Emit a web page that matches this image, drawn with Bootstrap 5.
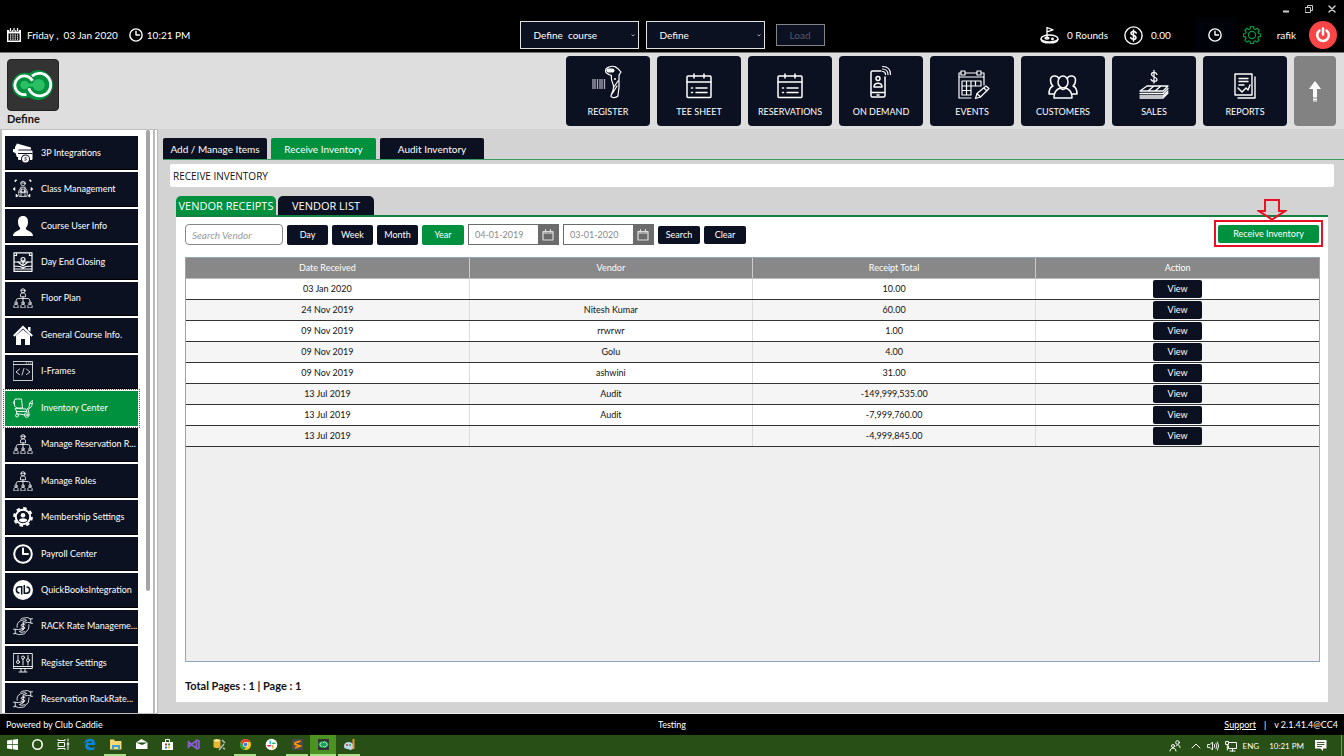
<!DOCTYPE html>
<html lang="en">
<head>
<meta charset="utf-8">
<meta name="viewport" content="width=device-width, initial-scale=1">
<title>Club Caddie - Receive Inventory</title>
<link rel="stylesheet" href="https://cdn.jsdelivr.net/npm/bootstrap@5.3.0/dist/css/bootstrap.min.css">
<style>
:root{--navy:#0c1122;--green:#00913f}
body{font-family:Lato,"Open Sans",sans-serif;font-size:9px;line-height:12px;color:#111;background:#d3d3d3}
button,input,select{font-family:inherit;font-size:inherit;line-height:inherit}
svg{display:block;flex:none}
.ln{fill:none;stroke:currentColor;stroke-linecap:round;stroke-linejoin:round}
.i20{width:20px;height:20px}
.topbar{background:#000;color:#fff;height:53px;border-bottom:1px solid #777070;font-size:10px}
.winctl{height:18px;padding-right:8px;gap:15px}
.winctl button{width:8px;height:8px;padding:0;border:0;background:none;color:#ccc}
.toprow{height:34px;padding:0 7px 0 7px}
.pickers{gap:7px}
.today{white-space:pre;margin:0 11px 0 6px}
.picker{width:119px;height:28px;border:1px solid #e2e2e2;border-radius:0;color:#fff;padding:0 9px 0 13px;appearance:none;background:var(--navy) url("data:image/svg+xml,%3Csvg xmlns='http://www.w3.org/2000/svg' viewBox='0 0 4 3'%3E%3Cpath d='M.5.5 2 2 3.5.5' fill='none' stroke='%23ccc' stroke-width='.8'/%3E%3C/svg%3E") no-repeat right 3px center/4px 3px}
.loadbtn{width:49px;height:22px;margin-left:4px;border:1px solid #848488;background:var(--navy);color:#555968;padding:0}
.clockbtn{width:40px;height:34px;background:#00020a;border:0;color:#fff;padding:0}
.plainbtn{background:none;border:0;padding:0}
.power{width:28px;height:28px;margin-left:13px;border-radius:50%;background:#f94545;color:#fff;border:0;padding:0}
.apphead{background:#dedede;height:76px;padding:3px 8px 3px 7px}
.logo{width:52px;height:52px;margin-top:3px;border-radius:4px;background:#333;border:1px solid #222}
.clubname{font-size:11px;font-weight:700;line-height:16px}
.tiles{gap:7px}
.tile{width:84px;height:70px;border:0;border-radius:4px;background:var(--navy);color:#fff;padding:0;font-size:9px}
.tile svg{width:36px;height:36px;margin:0 auto 5px}
.tile.up{width:42px;background:#828282}
.bodyrow{min-height:0}
.side{width:158px;background:#fff;border:1px solid #bdbdbd;border-width:1px 0 1px 2px;padding:6px 20px 0 3px}
.side ul{display:grid;grid-template:repeat(16,1fr)/minmax(0,1fr);gap:2px;height:calc(100% + 4px);margin:0;padding:0;list-style:none}
.side li{min-height:0}
.side a{display:flex;align-items:center;gap:8px;height:100%;padding:0 0 0 8px;background:var(--navy);color:#fff;text-decoration:none;border-bottom:1px solid #000;white-space:nowrap}
.side a.on{background:var(--green);border-color:var(--green);outline:1px dotted #555;outline-offset:1px}
.thumb{position:absolute;right:8px;top:0;width:4px;height:79%;background:#a5a5a5;border-radius:2px}
.rail{position:absolute;right:0;top:0;width:5px;height:100%;border:solid #bbb;border-width:0 1px 0 2px}
.content{padding:9px 0 11px 5px;min-width:0;border-bottom:1px solid #eee}
.maintabs{gap:4px;border-bottom:1px solid #399e62;font-size:10px}
.maintabs button{width:104px;height:21px;border:0;border-radius:2px 2px 0 0;background:var(--navy);color:#fff;padding:0}
.maintabs button.on{width:105px}
.maintabs .on,.subtabs .on,.navybtn.on{background:var(--green)}
.pagebar{margin:4px 10px 0 7px;height:23px;background:#fff;border-radius:2px;padding:0 3px;font-family:"Open Sans",sans-serif;font-size:10px}
.work{margin:9px 16px 0 13px;min-height:0}
.subtabs{gap:2px;border-bottom:2px solid #148143;font-family:"Open Sans",sans-serif;font-size:11px}
.subtabs button{width:96px;height:19px;border:0;border-radius:5px 5px 0 0;background:var(--navy);color:#fff;padding:0;white-space:nowrap}
.subtabs .on{width:100px}
.pane{background:#fff;padding:7px 8px 9px 9px;min-height:0}
.filters{gap:4px;height:21px}
.search{width:98px;height:21px;border:1px solid #888;border-radius:4px;padding:0 6px;font-style:italic;font-size:10px}
.search::placeholder{color:#9a9a9a}
.navybtn{height:20px;width:41px;border:0;border-radius:2px;background:var(--navy);color:#fff;padding:0}
.navybtn.on,.navybtn.low{width:42px}
.navybtn.low{height:18px}
.datebox{width:91px;height:21px;border:1px solid #6b6b6b;background:#6b6b6b}
.datebox input{flex:1;min-width:0;border:0;padding:0 6px;color:#8a8a8a;background:#fff}
.datebox button{width:20px;border:0;padding:0;background:#6b6b6b;color:#ddd}
.callout{border:2px solid #e81123;padding:3px 2px 2px;position:relative;margin:0 -3px 2px 0}
.callout .recv{width:101px;height:18px;border:0;border-radius:2px;background:var(--green);color:#fff;padding:0}
.callout .arrow{position:absolute;right:34px;bottom:100%;margin-bottom:1px}
.gridbox{margin-top:12px;background:#efefef;border:1px solid #8fa6bb;min-height:0}
.receipts{width:100%;table-layout:fixed;text-align:center}
.receipts th{height:20px;padding:0;background:#888;color:#fff;font-weight:400;border-bottom:1px solid #bbb;border-right:1px solid #ccc}
.receipts td{height:21px;padding:0;border-bottom:1px solid #333;border-right:1px solid #ddd;background:#fff}
.receipts tr:nth-child(even) td{background:#f5f5f5}
.receipts tr>:last-child{border-right:0}
.viewbtn{display:block;margin:0 auto;width:49px;height:18px;border:0;border-radius:2px;background:var(--navy);color:#fff;padding:0}
.pages{margin-top:17px;font-size:11px;font-weight:700;line-height:14px}
.foot{background:#000;color:#fff;height:21px;padding:0 6px}
.foot a{color:#fff}
.task{background:#284f15;color:#fff;height:21px}
.task .app{width:26px;height:21px;padding:0;border:0;border-bottom:2px solid transparent;background:none;color:#fff}
.task .app:first-child{width:24px}
.task .app.run{border-image:linear-gradient(90deg,transparent 3px,#a8df86 3px,#a8df86 23px,transparent 23px) 1;border-width:0 0 2px}
.task .app.cur{background:#4a9222;border-bottom-color:#a8df86}
.task .app svg{margin:0 auto;width:13px;height:13px}
.tray{gap:6px;padding-right:2px;font-size:8px}
</style>
</head>
<body>
<svg width="0" height="0" class="position-absolute" aria-hidden="true">
<defs>
<symbol id="clock" viewBox="0 0 20 20"><g class="ln" stroke-width="2"><circle cx="10" cy="10" r="8.8"/><path d="M10 4.5V10h5"/></g></symbol>
<symbol id="org" viewBox="0 0 20 20"><g class="ln" stroke-width=".8"><circle cx="10" cy="2.800" r="2.100"/><path d="M7.500 8.500V7c0-3 5-3 5 0v1.500zM8 2.300h4M10 8.500V14M3 13.500c0-2.500 1-3 3-3h8c2 0 3 .5 3 3"/><circle cx="3" cy="15" r="1.200"/><circle cx="10" cy="15" r="1.200"/><circle cx="17" cy="15" r="1.200"/><path d="M.9 19.500v-1.700c0-2 4.200-2 4.200 0v1.700zM7.900 19.500v-1.700c0-2 4.200-2 4.200 0v1.700zM14.900 19.500v-1.700c0-2 4.200-2 4.200 0v1.700z"/></g></symbol>
<symbol id="hands" viewBox="0 0 22 20"><g class="ln" stroke-width=".9"><path d="M21.500 2h-2v5h2M19.500 2.500 16 .7 10 1.500C8.500 2 8 3.500 9 4l4-1 2 1-4 1.500c-.5 1 .5 1.500 1.500 1.300L16 6l3.500.5M.5 18.500h2v-5h-2M2.500 18l3.500 1.500 6-.7c1.500-.5 2-2 1-2.500l-4 .7-2-1 4-1.500c.5-1-.5-1.500-1.500-1.300L6 14l-3.500-.3M4.500 11.500C4 8 5.500 5 8 4.500M17.500 8.500c.5 4-1 7-3.500 8"/><path d="M13.300 9C12.500 7.300 9 7.500 9 9.300s4 1 4 2.700c0 1.600-3.300 1.500-4 .2M11.200 7v7" stroke-width="1.100"/></g></symbol>
<symbol id="cal" viewBox="0 0 36 36"><g class="ln" stroke-width="1.500"><rect x="6" y="11" width="24" height="21.500" rx="1"/><path d="M6 17h24M13 9v4M23 9v4M15 23h11M15 27.500h11M10.500 23h1M10.500 27.500h1"/></g></symbol>
<symbol id="dcal" viewBox="0 0 12 12"><path class="ln" d="M1 2.500h10v8.500H1zM1 4h10M3.500.700v2M8.500.700v2" stroke-width="1.200"/></symbol>
<symbol id="cc" viewBox="0 0 44 34"><path fill="#00913f" d="M27 1a16 16 0 1 1-9 29A13.500 13.500 0 1 1 15 4l3 .5A16 16 0 0 1 27 1"/><circle cx="28" cy="17" r="6.500" fill="#2bbf63"/><circle cx="13" cy="17" r="4.500" fill="#2bbf63"/><path d="M12 17h15" stroke="#2bbf63" stroke-width="3.500"/><g fill="none" stroke="#fff" stroke-width="3"><path d="M21.500 12.500A10 10 0 1 0 15 27M17.500 20.500a12 12 0 1 0 3.500-13"/></g></symbol>
</defs>
</svg>

<div class="d-flex flex-column vh-100 overflow-hidden">
<header class="topbar flex-shrink-0">
  <div class="winctl d-flex justify-content-end align-items-center">
    <button aria-label="Minimize"><svg width="8" height="8"><path d="M1 6.500h6" stroke="currentColor" stroke-width="2"/></svg></button>
    <button aria-label="Restore"><svg width="8" height="8" class="ln"><path d="M.5 2.500h5v5h-5zM2.500 2.500v-2h5v5h-2"/></svg></button>
    <button aria-label="Close"><svg width="8" height="8" class="ln" stroke-width="1.500"><path d="M1 1l6 6M7 1 1 7"/></svg></button>
  </div>
  <div class="toprow d-flex align-items-center">
    <div class="d-flex align-items-center flex-fill w-25">
      <svg width="14" height="14" viewBox="0 0 14 14"><path fill="#fff" d="M0 2h14v12H0z"/><path d="M1.500 5.500h11v7h-11z" fill="#000"/><path d="M3 7.200h8.500M3 9.200h8.500M3 11.200h8.500" stroke="#fff" stroke-width="1.200" stroke-dasharray="1.300 1"/><path d="M3.500 0v3.500M7 0v3.500M10.500 0v3.500" stroke="#000" stroke-width="2.500"/><path d="M3.500 0v3M7 0v3M10.500 0v3" stroke="#fff" stroke-width="1.200"/></svg>
      <span class="today">Friday ,  03 Jan 2020</span>
      <svg width="14" height="14"><use href="#clock"/></svg><span class="ms-1">10:21 PM</span>
    </div>
    <div class="pickers d-flex align-items-center">
      <select class="picker" aria-label="Course"><option>Define &nbsp;course</option></select>
      <select class="picker" aria-label="Definition"><option>Define</option></select>
      <button class="loadbtn" disabled>Load</button>
    </div>
    <div class="d-flex align-items-center justify-content-end flex-fill w-25">
      <svg width="19" height="19" viewBox="0 0 19 19" class="ln" stroke-width="1.300"><ellipse cx="9.500" cy="12.500" rx="8.500" ry="3.500"/><path d="M1 13.500c1 4.500 16 4.500 17 0M7 11.500V1.500l6 2.300-6 2"/><ellipse cx="7" cy="12.300" rx="2" ry=".8"/><circle cx="12.500" cy="13" r=".8"/></svg>
      <span class="ms-2">0 Rounds</span>
      <svg class="ms-3" width="19" height="19" viewBox="0 0 19 19"><g class="ln" stroke-width="1.400"><circle cx="9.500" cy="9.500" r="8.600"/><path d="M12.200 7C11.500 5 7 5 7 7.300s5 1.800 5 4.200-4.500 2.300-5.300.2M9.500 4v11" stroke-width="1.600"/></g></svg>
      <span class="ms-2">0.00</span>
      <button class="clockbtn ms-4" aria-label="Time clock"><svg class="mx-auto" width="14" height="14"><use href="#clock"/></svg></button>
      <button class="plainbtn ms-2" aria-label="Settings"><svg width="18" height="18" viewBox="0 0 18 18" fill="none" stroke="#07983f" stroke-width="1.200"><circle cx="9" cy="9" r="3.600"/><path d="M7.500.7h3l.4 2.200 1.400.6 1.900-1.200 2 2L15 6.100l.5 1.400 2 .4v2.500l-2 .4-.6 1.400 1.200 1.900-2 2-1.900-1.200-1.400.6-.4 2H7.600l-.5-2-1.400-.6-1.900 1.200-2-2L3 12.200l-.6-1.400-1.900-.4V7.900l2-.4.600-1.400-1.200-1.800 2-2 1.800 1.200 1.400-.6z"/></svg></button>
      <span class="ms-3">rafik</span>
      <button class="power" aria-label="Log out"><svg class="mx-auto ln" width="16" height="16" stroke-width="2.500"><path d="M8 1.500v6M4.500 3.500a5.800 5.800 0 1 0 7 0"/></svg></button>
    </div>
  </div>
</header>

<div class="apphead d-flex justify-content-between flex-shrink-0">
  <div><div class="logo d-flex align-items-center justify-content-center"><svg width="44" height="32"><use href="#cc"/></svg></div><div class="clubname">Define</div></div>
  <nav class="tiles d-flex">
    <button class="tile"><svg viewBox="0 0 36 36"><path d="M3 14v10M5 14v10M7.500 14v10M10 14v10M12 14v10M14.500 14v10" stroke="#aab" stroke-width="1.300"/><g class="ln" stroke-width="1.200"><path d="M19 2c5-2 8 0 12 5-1 2-2 2-2 4v12c-.5 3-1 6-1 8-2 2-6 2-7 .5 0-3 3-6 2.500-10 0-4-3-5-2-11-3-1-6-2-6-4.500 0-3 2-3.500 3.500-4zM24 22l4-6M22 29l5-8"/></g><rect x="16.500" y="3.500" width="8" height="4" rx="2" fill="#fff"/><circle cx="25" cy="14" r="1" fill="#fff"/></svg>REGISTER</button>
    <button class="tile"><svg><use href="#cal"/></svg>TEE SHEET</button>
    <button class="tile"><svg><use href="#cal"/></svg>RESERVATIONS</button>
    <button class="tile"><svg viewBox="0 0 36 36"><g class="ln" stroke-width="1.500"><path d="M18 6H9.500Q8 6 8 7.500v23q0 1.500 1.500 1.500h11q1.500 0 1.500-1.500V12M8 27.500h14M14 30h2"/><circle cx="15" cy="13.500" r="2"/><path d="M11 22c0-5 8-5 8 0z"/><path d="M19.500 6.500c2 0 3 1 3 3M19.500 4c3 0 5.500 2 5.500 5.500M19.500 1.500c5 0 8 3 8 8" stroke-width="1.200"/></g></svg>ON DEMAND</button>
    <button class="tile"><svg viewBox="0 0 36 36"><g class="ln" stroke-width="1.200"><path d="M17 33H5V8h2M11 8h12M27 8h3v12M5 12h25M7 6h4v4H7zM23 6h4v4h-4zM8 16h19v5H8zM8 21v9h9v-9M8 25.500h9M12.500 16v14M17 16v5M21.500 16v5M32 21l3 2.500-8.500 8.500-5 1.500 1.500-5zM23 28.500l3.500 3.500M30 23l3 3"/></g></svg>EVENTS</button>
    <button class="tile"><svg viewBox="0 0 36 36"><g class="ln" stroke-width="1.500"><ellipse cx="18" cy="17" rx="5" ry="6"/><path d="M9 33c0-6 2-8 6-10 2 2 4 2 6 0 4 2 6 4 6 10zM13.500 13c-1-3-8-3-8 2 0 3 1 5 2.500 6-3 1-4 3-4 8h5M22.500 13c1-3 8-3 8 2 0 3-1 5-2.500 6 3 1 4 3 4 8h-5"/></g></svg>CUSTOMERS</button>
    <button class="tile"><svg viewBox="0 0 36 36"><g class="ln" stroke-width="1.300"><path d="M21 9.500C20 6.500 15.500 7 15.500 9.500S21 12 21 14.500 16 17 15 14.500M18 5.500v12.500M11 21h21l-5 5H4zM4 28.500h23l5-5M4 31h23l5-5M4 33h23l5-5M18 21l-6 5M25 21l-6 5"/></g></svg>SALES</button>
    <button class="tile"><svg viewBox="0 0 36 36"><g class="ln" stroke-width="1.400"><path d="M8 9h17v21H8zM11 33h17V12M12 13.500h9M12 16.500h9M12 20h5M11 23l4 4 4-4 2 2 2-5"/></g></svg>REPORTS</button>
    <button class="tile up" aria-label="Scroll up"><svg class="mb-0" viewBox="0 0 36 36"><path fill="#fff" d="M18 8l6 8h-4v8h-4v-8h-4z"/><path d="M18 24.500v4" stroke="#fff" stroke-width="4" stroke-dasharray="1 .5"/></svg></button>
  </nav>
</div>

<div class="bodyrow d-flex flex-grow-1">
  <nav class="side flex-shrink-0 position-relative overflow-hidden">
    <ul>
      <li><a href="#"><svg class="i20" viewBox="0 0 20 20"><path fill="#fff" d="M2 4 4 .5 18 4.500v2H5.500V14H3.800L2.500 10 0 9V6h2z"/><rect x="5" y="7.500" width="14.500" height="9.500" rx="1" fill="#fff"/><path d="M5 10.500h14.500" stroke="#0c1122"/><circle cx="12.500" cy="16" r="4.500" fill="#0c1122"/><circle cx="12.500" cy="16" r="3.500" fill="#fff"/><path d="M13.600 14.700c-2-.8-2.500.8-1 1.200s1 2-1.200 1.200" fill="none" stroke="#0c1122" stroke-width=".8"/></svg><span>3P Integrations</span></a></li>
      <li><a href="#"><svg class="i20" viewBox="0 0 20 20"><g class="ln" stroke-width=".8"><circle cx="10" cy="4.500" r="2.300"/><path d="M6 17c-1-4 0-8 4-9 4 1 5 5 4 9zM8 4h4M8 8v9M12 8v9M6 13h8"/><circle cx="10" cy="12" r="2"/></g><path d="M2 1h2L2 3zM18 1h-2l2 2zM0 10l2-1.500v3zM20 10l-2-1.500v3zM3 15l2 2-2 1zM17 15l-2 2 2 1z" fill="#fff" stroke="#fff" stroke-width=".6"/></svg><span>Class Management</span></a></li>
      <li><a href="#"><svg class="i20" viewBox="0 0 20 20"><path fill="#fff" d="M10 0c3.500 0 5 2.500 5 6 0 3-1 5-2.300 6 0 3.500 7.300 2.500 7.300 8H0c0-5.500 7.300-4.500 7.300-8C6 11 5 9 5 6c0-3.500 1.500-6 5-6"/></svg><span>Course User Info</span></a></li>
      <li><a href="#"><svg class="i20" viewBox="0 0 20 20"><g class="ln" stroke-width="1.200"><path d="M1 .8h18v18.500H1zM2 3.500h1.500V2M18 3.500h-1.500V2M1 10h4l5 4 5-4h4M1 14l6 .5 3 1.500 3-1.500 6-.5M1 17h18"/><circle cx="10" cy="7.500" r="2"/><path d="M5 10h10M10 8v5"/></g></svg><span>Day End Closing</span></a></li>
      <li><a href="#"><svg class="i20"><use href="#org"/></svg><span>Floor Plan</span></a></li>
      <li><a href="#"><svg class="i20" viewBox="0 0 20 20"><path fill="#fff" d="M10 4.500l7 6V20h-5v-6H8v6H3v-9.500zM15 2h2.500v5L15 5z"/><path d="M.8 11 10 2l9.200 9" fill="none" stroke="#fff" stroke-width="2"/></svg><span>General Course Info.</span></a></li>
      <li><a href="#"><svg class="i20" viewBox="0 0 20 20"><g class="ln" stroke-width=".8"><path d="M.5.5h19v19H.5zM.5 3.500h19M13 2h.5M15.300 2h.5M17.500 2h.5M6.500 8 3 11l3.500 2.500M13.500 8l3.500 3-3.500 2.500M11 7.500 9 14"/></g></svg><span>I-Frames</span></a></li>
      <li><a href="#" class="on" aria-current="page"><svg class="i20" viewBox="0 0 20 20"><g class="ln" stroke-width=".9"><path d="M2.500 1h6l1 9H4L1.500 8V3zM1.500 3C0 3 0 5.500 1 6M2.500 10.500 13 11l1 2.500H4zM14 11l2-1 .5-5 3-2.500M19.500 4c0 3-1 5-3 6.500M15 11l1 4M3.500 13.500v2L12 17M16.500 5.500h2"/><circle cx="4" cy="17.500" r="1.500"/><circle cx="13.800" cy="17" r="2.300"/><circle cx="13.800" cy="17" r=".6"/></g></svg><span>Inventory Center</span></a></li>
      <li><a href="#"><svg class="i20"><use href="#org"/></svg><span>Manage Reservation R...</span></a></li>
      <li><a href="#"><svg class="i20"><use href="#org"/></svg><span>Manage Roles</span></a></li>
      <li><a href="#"><svg class="i20" viewBox="0 0 20 20"><circle cx="10" cy="10" r="7.200" fill="none" stroke="#fff" stroke-width="2"/><circle cx="10" cy="10" r="8.800" fill="none" stroke="#fff" stroke-width="2.200" stroke-dasharray="3.450 3.450"/><circle cx="10" cy="8.200" r="2.300" fill="#fff"/><path d="M5.800 13.500c.5-3 8-3 8.500 0-2 2.300-6.500 2.300-8.500 0" fill="#fff"/></svg><span>Membership Settings</span></a></li>
      <li><a href="#"><svg class="i20"><use href="#clock"/></svg><span>Payroll Center</span></a></li>
      <li><a href="#"><svg class="i20" viewBox="0 0 20 20"><circle cx="10" cy="10" r="10" fill="#fff"/><path d="M8.700 14.500V6.700H6.500a3 3 0 0 0 0 6.300M11.300 5v8.200h2.200a3 3 0 0 0 0-6.300" fill="none" stroke="#0c1122" stroke-width="1.500"/></svg><span>QuickBooksIntegration</span></a></li>
      <li><a href="#"><svg class="i20"><use href="#hands"/></svg><span>RACK Rate Manageme...</span></a></li>
      <li><a href="#"><svg class="i20" viewBox="0 0 20 20"><g class="ln" stroke-width=".9"><path d="M.7.5h18.600v15H.7zM.7 13.500h18.600M8 15.500v3M12 15.500v3M6 19h8M5 2.500v5M10 6v6M15 2.500v3M15 9v3"/><circle cx="5" cy="9" r="1.500"/><circle cx="10" cy="4.500" r="1.500"/><circle cx="15" cy="7.300" r="1.500"/></g></svg><span>Register Settings</span></a></li>
      <li><a href="#"><svg class="i20"><use href="#hands"/></svg><span>Reservation RackRate...</span></a></li>
    </ul>
    <div class="thumb"></div><div class="rail"></div>
  </nav>

  <main class="content flex-grow-1 d-flex flex-column">
    <div class="maintabs d-flex flex-shrink-0"><button>Add / Manage Items</button><button class="on">Receive Inventory</button><button>Audit Inventory</button></div>
    <div class="pagebar d-flex align-items-center flex-shrink-0">RECEIVE INVENTORY</div>
    <section class="work d-flex flex-column flex-grow-1">
      <div class="subtabs d-flex flex-shrink-0"><button class="on">VENDOR RECEIPTS</button><button>VENDOR LIST</button></div>
      <div class="pane d-flex flex-column flex-grow-1">
        <div class="filters d-flex align-items-center flex-shrink-0">
          <input class="search" type="text" placeholder="Search Vendor" aria-label="Search Vendor">
          <button class="navybtn">Day</button><button class="navybtn">Week</button><button class="navybtn">Month</button><button class="navybtn on">Year</button>
          <div class="datebox d-flex"><input type="text" value="04-01-2019" aria-label="From date"><button aria-label="Pick from date"><svg class="mx-auto" width="12" height="12"><use href="#dcal"/></svg></button></div>
          <div class="datebox d-flex"><input type="text" value="03-01-2020" aria-label="To date"><button aria-label="Pick to date"><svg class="mx-auto" width="12" height="12"><use href="#dcal"/></svg></button></div>
          <button class="navybtn low">Search</button><button class="navybtn low">Clear</button>
          <div class="callout ms-auto"><svg class="arrow" width="30" height="22" viewBox="0 0 30 22"><path d="M8 1h14v11h6L15 20.500 2 12h6z" fill="none" stroke="#e81123" stroke-width="2"/></svg><button class="recv d-block">Receive Inventory</button></div>
        </div>
        <div class="gridbox flex-grow-1">
          <table class="receipts">
            <thead><tr><th>Date Received</th><th>Vendor</th><th>Receipt Total</th><th>Action</th></tr></thead>
            <tbody>
              <tr><td>03 Jan 2020</td><td></td><td>10.00</td><td><button class="viewbtn">View</button></td></tr>
              <tr><td>24 Nov 2019</td><td>Nitesh Kumar</td><td>60.00</td><td><button class="viewbtn">View</button></td></tr>
              <tr><td>09 Nov 2019</td><td>rrwrwr</td><td>1.00</td><td><button class="viewbtn">View</button></td></tr>
              <tr><td>09 Nov 2019</td><td>Golu</td><td>4.00</td><td><button class="viewbtn">View</button></td></tr>
              <tr><td>09 Nov 2019</td><td>ashwini</td><td>31.00</td><td><button class="viewbtn">View</button></td></tr>
              <tr><td>13 Jul 2019</td><td>Audit</td><td>-149,999,535.00</td><td><button class="viewbtn">View</button></td></tr>
              <tr><td>13 Jul 2019</td><td>Audit</td><td>-7,999,760.00</td><td><button class="viewbtn">View</button></td></tr>
              <tr><td>13 Jul 2019</td><td></td><td>-4,999,845.00</td><td><button class="viewbtn">View</button></td></tr>
            </tbody>
          </table>
        </div>
        <div class="pages">Total Pages : 1 | Page : 1</div>
      </div>
    </section>
  </main>
</div>

<footer class="foot d-flex align-items-center flex-shrink-0">
  <div class="flex-fill w-25">Powered by Club Caddie</div><div>Testing</div>
  <div class="flex-fill w-25 d-flex justify-content-end gap-2"><a href="#">Support</a><span>|</span><span>v 2.1.41.4@CC4</span></div>
</footer>
<div class="task d-flex align-items-center flex-shrink-0">
  <button class="app" aria-label="Start"><svg viewBox="0 0 13 13"><path fill="#fff" d="M1 2.500 6 1.800V6H1zM6.600 1.700 12 1v5H6.600zM1 6.700h5v4.500l-5-.7zM6.600 6.700H12V12l-5.400-.700z"/></svg></button>
  <button class="app" aria-label="Cortana"><svg viewBox="0 0 13 13"><circle cx="6.500" cy="6.500" r="4.700" fill="none" stroke="#fff" stroke-width="1.600"/></svg></button>
  <button class="app" aria-label="Task view"><svg viewBox="0 0 13 13" class="ln"><path d="M1 1.500v1h7v-1M1.500 4.500h6v4h-6zM1 11.500v-1h7v1M11 1v1.500M11 4v7.500M10 6h2"/></svg></button>
  <button class="app" aria-label="Edge"><svg viewBox="0 0 13 13"><path fill="#0a84dc" d="M1 6C1.500 2.500 4 .7 7 .7c3.500 0 5.500 2.500 5.200 6.300H5c.2 3 4 3.300 6.500 2v2.300C7 13.500 2 12 2.200 7.500c.1-2 1.300-3 2.800-3.800-1.500.3-3 1-4 2.300m4-1h4c0-2.500-3.800-2.500-4 0"/></svg></button>
  <button class="app run" aria-label="File Explorer"><svg viewBox="0 0 13 13"><path fill="#f7d774" d="M1 1.500h4l1 1.500h6.500v8.500H1z"/><path fill="#3aa0e0" d="M3 7h8v4.500H9V9H5v2.500H3z"/></svg></button>
  <button class="app" aria-label="Mail"><svg viewBox="0 0 13 13"><path fill="#fff" d="M1 4.500 6.500 1 12.500 4.500V11H1z"/><path d="M1 4.500 7 7l5.500-2.500" fill="#284f15"/></svg></button>
  <button class="app" aria-label="Store"><svg viewBox="0 0 13 13"><path fill="#fff" d="M1 4h11v8H1z"/><path d="M4.500 4V1.500h4V4" fill="none" stroke="#fff"/><path fill="#e23" d="M4 5.500h2v2H4z"/><path fill="#2a4" d="M7 5.500h2v2H7z"/><path fill="#28d" d="M4 8.500h2v2H4z"/><path fill="#fb0" d="M7 8.500h2v2H7z"/></svg></button>
  <button class="app" aria-label="Visual Studio"><svg viewBox="0 0 13 13"><path d="M1.500 4 9.500 10.500V2.500L1.500 9zM9.500 2 12 3v7l-2.500 1" fill="none" stroke="#8a5fd0" stroke-width="1.700"/></svg></button>
  <button class="app" aria-label="Database tools"><svg viewBox="0 0 13 13"><ellipse cx="4" cy="2.500" rx="3.500" ry="1.500" fill="#ffe08a"/><path fill="#e8b830" d="M.5 3c1 1.500 6 1.500 7 0v6c-1 1.500-6 1.500-7 0z"/><path d="M6 12l5-6M9 2l3 3M10 10l2 1" stroke="#bbb" stroke-width="1.500"/></svg></button>
  <button class="app run" aria-label="Chrome"><svg viewBox="0 0 13 13"><circle cx="6.500" cy="6.500" r="5.500" fill="#f5c518"/><path fill="#e04030" d="M1.700 3.800a5.500 5.500 0 0 1 9.700.2H6.500L4 7.500z"/><path fill="#2a9d4a" d="M1.700 3.800 4.300 8l2.500 1-1.500 2.900A5.500 5.500 0 0 1 1.700 3.800"/><circle cx="6.500" cy="6.500" r="2.500" fill="#fff"/><circle cx="6.500" cy="6.500" r="1.900" fill="#3b7de0"/></svg></button>
  <button class="app" aria-label="Slack"><svg viewBox="0 0 13 13"><circle cx="6.500" cy="6.500" r="5.800" fill="#fff"/><g stroke-width="1.600" stroke-linecap="round"><path d="M5.200 3v2.500" stroke="#36c5f0"/><path d="M7.700 5.300H10" stroke="#2eb67d"/><path d="M7.800 7.500V10" stroke="#ecb22e"/><path d="M3 7.700h2.300" stroke="#e01e5a"/></g></svg></button>
  <button class="app run" aria-label="Sublime Text"><svg viewBox="0 0 13 13"><path fill="#4a4a4a" d="M1 1h11v11H1z"/><path d="M9.500 3 4 4.800v1.500L9 8 4 10" fill="none" stroke="#ff9800" stroke-width="1.800"/></svg></button>
  <button class="app cur" aria-label="Club Caddie"><svg viewBox="0 0 13 13"><path fill="#333" d="M1 1h11v11H1z"/><ellipse cx="6.500" cy="6.500" rx="5" ry="3.500" fill="#12a050"/><path d="M5 4.500a2 2 0 1 0 0 4M6 5a2.300 2.300 0 1 1 0 3" fill="none" stroke="#bfe8cd" stroke-width=".9"/></svg></button>
  <button class="app run" aria-label="Paint"><svg viewBox="0 0 13 13"><path fill="#b8d8ea" d="M1 8c0-4 5-5 8-3s2 7-2 7c-1 0-1-1-2-1-2 0-4 0-4-3"/><circle cx="4" cy="7" r="1" fill="#d33"/><circle cx="7" cy="7" r="1" fill="#2a6"/><path d="M10.500 1v10" stroke="#e8953a" stroke-width="2"/></svg></button>
  <div class="tray d-flex align-items-center ms-auto">
    <svg width="12" height="12" class="ln me-1"><circle cx="8.500" cy="2.500" r="1.800"/><circle cx="4" cy="6" r="1.500"/><path d="M1 11c0-4 6-4 6 0M7 6c2-2 4-1 4 1.500"/></svg>
    <svg width="10" height="12" class="ln"><path d="M1 8l4-4 4 4"/></svg>
    <svg width="12" height="12" class="ln" stroke-width=".9"><path d="M1 4.500h2L5.500 2v8L3 7.500H1zM7.300 4.500q1 1.500 0 3M9 3.200q2 2.800 0 5.600M10.500 2q2.500 4 0 8"/></svg>
    <svg width="12" height="12" class="ln"><path d="M4.500 2.500h7v6H3.500V6M5 11h5M7.500 8.500V11M1 1.500h2.500v3H1zM2.300 4.500V10"/></svg>
    <span>ENG</span><span class="ms-1">10:21 PM</span>
    <svg class="ms-1" width="13" height="13"><path fill="#fff" d="M1 1h11.500v8.500H9V12L6.500 9.500H1z"/><path d="M3 3.500h7.500M3 5.500h7.500M3 7.500h5" stroke="#284f15" stroke-width=".9"/></svg>
    <svg class="ms-2" width="1" height="21"><path d="M.5 0v21" stroke="#7c9470"/></svg>
  </div>
</div>
</div>
<script src="https://cdn.jsdelivr.net/npm/bootstrap@5.3.0/dist/js/bootstrap.bundle.min.js"></script>
</body>
</html>
